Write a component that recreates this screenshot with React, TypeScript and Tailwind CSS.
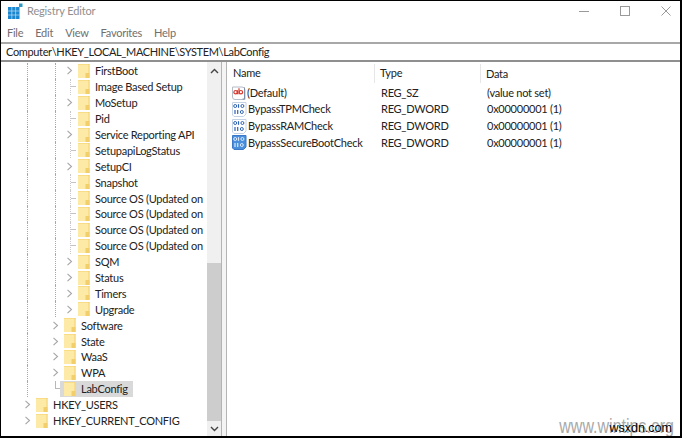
import React from "react";

const font = "font-['Lato',sans-serif]";

function Folder() {
  return (
    <svg width="12" height="14" viewBox="0 0 12 14" className="shrink-0">
      <rect x="0" y="0" width="11.5" height="14" fill="#fdeaa6" />
      <rect x="0" y="0" width="11.5" height="1" fill="#f8dc86" />
      <rect x="10.5" y="0" width="1" height="14" fill="#f3d070" />
      <rect x="7.5" y="9" width="4" height="5" fill="#f3cf6c" />
    </svg>
  );
}

function Chevron() {
  return (
    <svg width="7" height="9" viewBox="0 0 7 9" className="shrink-0">
      <path d="M1.5 0.8 L5.5 4.5 L1.5 8.2" fill="none" stroke="#a6a6a6" strokeWidth="1.1" />
    </svg>
  );
}

type Item = { t: string; l: 1 | 2 | 3; k?: boolean; sel?: boolean };

const items: Item[] = [
  { t: "FirstBoot", l: 3, k: true },
  { t: "Image Based Setup", l: 3 },
  { t: "MoSetup", l: 3, k: true },
  { t: "Pid", l: 3 },
  { t: "Service Reporting API", l: 3, k: true },
  { t: "SetupapiLogStatus", l: 3 },
  { t: "SetupCI", l: 3, k: true },
  { t: "Snapshot", l: 3 },
  { t: "Source OS (Updated on", l: 3 },
  { t: "Source OS (Updated on", l: 3 },
  { t: "Source OS (Updated on", l: 3 },
  { t: "Source OS (Updated on", l: 3 },
  { t: "SQM", l: 3, k: true },
  { t: "Status", l: 3, k: true },
  { t: "Timers", l: 3, k: true },
  { t: "Upgrade", l: 3, k: true },
  { t: "Software", l: 2, k: true },
  { t: "State", l: 2, k: true },
  { t: "WaaS", l: 2, k: true },
  { t: "WPA", l: 2, k: true },
  { t: "LabConfig", l: 2, sel: true },
  { t: "HKEY_USERS", l: 1, k: true },
  { t: "HKEY_CURRENT_CONFIG", l: 1, k: true },
];

function Row({ it }: { it: Item }) {
  return (
    <div className="flex h-[15.9px] items-center whitespace-nowrap">
      {it.l === 1 ? (
        <div className="w-[23px] shrink-0" />
      ) : (
        <div className="h-full w-[27px] shrink-0 border-r border-dotted border-[#a8a8a8]" />
      )}
      {it.l === 3 && <div className="h-full w-[28px] shrink-0 border-r border-dotted border-[#a8a8a8]" />}
      <div className={it.l === 2 ? "ml-[24px] flex h-full w-[7px] shrink-0 items-center" : it.l === 3 ? "ml-[10px] flex h-full w-[7px] shrink-0 items-center" : "flex h-full w-[7px] shrink-0 items-center"}>
        {it.k ? (
          <Chevron />
        ) : it.sel ? (
          <div className="ml-[3px] h-[8px] w-[5px] shrink-0 self-start border-b border-l border-[#b8b8b8]" />
        ) : (
          <div className="ml-[4px] flex h-full w-[6px] shrink-0 items-center border-l border-dotted border-[#c8c8c8]">
            <div className="h-px w-full bg-[#c4c4c4]" />
          </div>
        )}
      </div>
      <div className={it.sel ? "ml-[1px] flex h-[16px] w-[73px] items-center bg-[#d9d9d9] pl-[4px]" : "ml-[5px] flex items-center"}>
        <Folder />
        <span className="ml-[5px] text-[11px] leading-none tracking-[-0.25px] text-[#222]">{it.t}</span>
      </div>
    </div>
  );
}

function AbIcon() {
  return (
    <svg width="14" height="14" viewBox="0 0 14 14" className="shrink-0">
      <path d="M0.5 1 H10 Q13 1 13 4 V13.5 H3 Q0.5 13.5 0.5 11 Z" fill="#fff" stroke="#b4bcc8" />
      <path d="M12.5 1.5 V13 H10.5" fill="none" stroke="#7f8fa6" />
      <circle cx="3.6" cy="6.2" r="1.7" fill="none" stroke="#d8392c" strokeWidth="1.2" />
      <path d="M5.4 4.2 V8.2" stroke="#d8392c" strokeWidth="1.2" />
      <path d="M7 2.2 V8.2" stroke="#d8392c" strokeWidth="1.2" />
      <circle cx="8.9" cy="6.2" r="1.7" fill="none" stroke="#d8392c" strokeWidth="1.2" />
    </svg>
  );
}

function BinIcon({ filled }: { filled?: boolean }) {
  const ink = filled ? "#dbe9fb" : "#2f62b4";
  return (
    <svg width="15" height="15" viewBox="0 0 15 15" className="shrink-0">
      <path
        d="M0.5 0.5 H14 V12 L11.5 14.5 H2 L0.5 13 Z"
        fill={filled ? "#4a8fdc" : "#ffffff"}
        stroke={filled ? "#3b78c8" : "#c4d2e6"}
      />
      <circle cx="3.2" cy="4" r="1.5" fill="none" stroke={ink} />
      <path d="M6.5 2.2 V5.8" stroke={ink} strokeWidth="1.2" />
      <circle cx="10.4" cy="4" r="1.5" fill="none" stroke={ink} />
      <path d="M3 8 V12" stroke={ink} strokeWidth="1.2" />
      <path d="M5.7 8 V12" stroke={ink} strokeWidth="1.2" />
      <circle cx="9.8" cy="10" r="1.5" fill="none" stroke={ink} />
    </svg>
  );
}

function AppIcon() {
  return (
    <svg width="15" height="16" viewBox="0 0 15 16" className="shrink-0">
      <rect x="0" y="4" width="11.5" height="12" fill="#1a86d0" />
      <path d="M3.8 4 V16 M7.6 4 V16 M0 8 H11.5 M0 12 H11.5" stroke="#bfe0f5" strokeWidth="0.7" />
      <rect x="11" y="0.5" width="3.5" height="3.5" fill="#2a9ac4" />
    </svg>
  );
}

const rows: { n: string; ty: string; d: string; icon: React.ReactNode }[] = [
  { n: "(Default)", ty: "REG_SZ", d: "(value not set)", icon: <AbIcon /> },
  { n: "BypassTPMCheck", ty: "REG_DWORD", d: "0x00000001 (1)", icon: <BinIcon /> },
  { n: "BypassRAMCheck", ty: "REG_DWORD", d: "0x00000001 (1)", icon: <BinIcon /> },
  { n: "BypassSecureBootCheck", ty: "REG_DWORD", d: "0x00000001 (1)", icon: <BinIcon filled /> },
];

export default function App() {
  return (
    <div className={`relative flex h-[438px] w-[682px] flex-col overflow-hidden border-t border-l border-r-2 border-b-2 border-black bg-white ${font}`}>
      <div className="flex h-[20px] shrink-0 items-center pl-[7px]">
        <AppIcon />
        <span className="ml-[4px] text-[11px] tracking-[-0.15px] text-[#8f8f8f]">Registry Editor</span>
        <div className="ml-auto flex items-center gap-[31px] pr-[9px]">
          <svg width="10" height="10" viewBox="0 0 10 10"><path d="M0 5.5 H10" stroke="#9a9a9a" /></svg>
          <svg width="10" height="10" viewBox="0 0 10 10"><rect x="0.5" y="0.5" width="9" height="9" fill="none" stroke="#9a9a9a" /></svg>
          <svg width="10" height="10" viewBox="0 0 10 10"><path d="M0.5 0.5 L9.5 9.5 M9.5 0.5 L0.5 9.5" stroke="#9a9a9a" /></svg>
        </div>
      </div>
      <div className="flex h-[23px] shrink-0 items-center gap-[12px] border-b-2 border-[#a8a8a8] pt-[3px] pl-[6px] text-[11px] tracking-[-0.25px] text-[#6f6f6f]">
        <span>File</span>
        <span>Edit</span>
        <span>View</span>
        <span>Favorites</span>
        <span>Help</span>
      </div>
      <div className="flex h-[18px] shrink-0 items-center border-b-2 border-[#8f8f8f] pl-[5px] text-[11px] tracking-[-0.35px] text-[#222]">
        Computer\HKEY_LOCAL_MACHINE\SYSTEM\LabConfig
      </div>
      <div className="flex min-h-0 flex-1">
        <div className="flex w-[220px] shrink-0">
          <div className="flex-1 overflow-hidden pt-px">
            {items.map((it, i) => (
              <Row key={i} it={it} />
            ))}
          </div>
          <div className="flex w-[14px] shrink-0 flex-col bg-[#f0f0f0]">
            <div className="flex h-[18px] items-center justify-center">
              <svg width="9" height="6" viewBox="0 0 9 6"><path d="M1 5 L4.5 1.5 L8 5" fill="none" stroke="#444" strokeWidth="1.4" /></svg>
            </div>
            <div className="flex-1" />
            <div className="h-[158px] bg-[#cdcdcd]" />
            <div className="flex h-[15px] items-center justify-center">
              <svg width="9" height="6" viewBox="0 0 9 6"><path d="M1 1 L4.5 4.5 L8 1" fill="none" stroke="#444" strokeWidth="1.4" /></svg>
            </div>
          </div>
        </div>
        <div className="w-[6px] shrink-0 border-x border-[#b4b4b4] bg-[#f4f4f4]" />
        <div className="flex-1 text-[11px] tracking-[-0.25px] text-[#222]">
          <div className="flex h-[21px] items-center pt-[2px]">
            <div className="h-full w-[148px] border-r border-[#e6e6e6] pl-[6px] leading-[18px]">Name</div>
            <div className="h-full w-[106px] border-r border-[#e6e6e6] pl-[5px] leading-[18px]">Type</div>
            <div className="pl-[5px] leading-[18px]">Data</div>
          </div>
          <div className="pt-[1.5px]">
            {rows.map((r) => (
              <div key={r.n} className="flex h-[16.7px] items-center">
                <div className="flex w-[148px] items-center gap-[1px] pl-[5px]">
                  {r.icon}
                  <span>{r.n}</span>
                </div>
                <div className="w-[106px] pl-[6px]">{r.ty}</div>
                <div className="pl-[6px]">{r.d}</div>
              </div>
            ))}
          </div>
        </div>
      </div>
      <span className="absolute right-[6px] bottom-[-2px] origin-bottom scale-y-125 font-['Liberation_Sans',sans-serif] text-[16px] leading-[18px] text-[#a8a8a8]">www.wintips.org</span>
      <span className="absolute right-[8px] bottom-[1px] font-['Liberation_Sans',sans-serif] text-[12.5px] leading-[14px] text-black">wsxdn.com</span>
    </div>
  );
}
